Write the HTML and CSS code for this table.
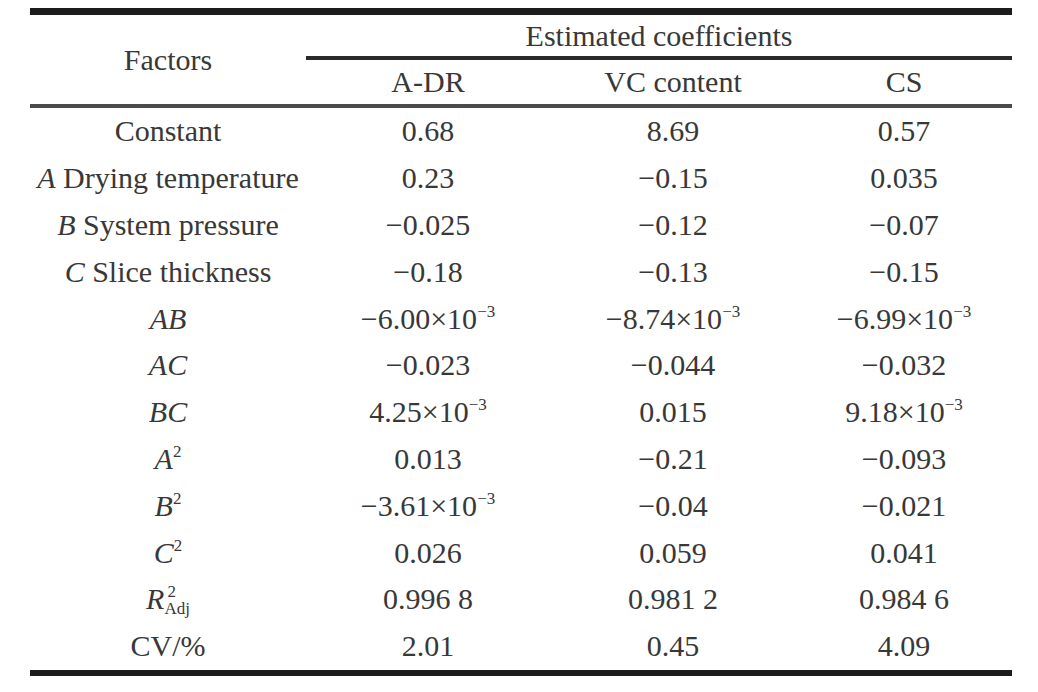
FILE: index.html
```html
<!DOCTYPE html>
<html>
<head>
<meta charset="utf-8">
<link rel="stylesheet" href="styles.css">
</head>
<body>
<table class="coef">
  <colgroup>
    <col class="c-factor">
    <col class="c-adr">
    <col class="c-vc">
    <col class="c-cs">
  </colgroup>
  <thead>
    <tr class="h1">
      <th rowspan="2" class="factors">Factors</th>
      <th colspan="3" class="group">Estimated coefficients</th>
    </tr>
    <tr class="h2">
      <th>A-DR</th>
      <th>VC content</th>
      <th>CS</th>
    </tr>
  </thead>
  <tbody>
    <tr><td>Constant</td><td>0.68</td><td>8.69</td><td>0.57</td></tr>
    <tr><td><i>A</i> Drying temperature</td><td>0.23</td><td>−0.15</td><td>0.035</td></tr>
    <tr><td><i>B</i> System pressure</td><td>−0.025</td><td>−0.12</td><td>−0.07</td></tr>
    <tr><td><i>C</i> Slice thickness</td><td>−0.18</td><td>−0.13</td><td>−0.15</td></tr>
    <tr><td><i>AB</i></td><td>−6.00×10<sup>−3</sup></td><td>−8.74×10<sup>−3</sup></td><td>−6.99×10<sup>−3</sup></td></tr>
    <tr><td><i>AC</i></td><td>−0.023</td><td>−0.044</td><td>−0.032</td></tr>
    <tr><td><i>BC</i></td><td>4.25×10<sup>−3</sup></td><td>0.015</td><td>9.18×10<sup>−3</sup></td></tr>
    <tr><td><i>A</i><sup>2</sup></td><td>0.013</td><td>−0.21</td><td>−0.093</td></tr>
    <tr><td><i>B</i><sup>2</sup></td><td>−3.61×10<sup>−3</sup></td><td>−0.04</td><td>−0.021</td></tr>
    <tr><td><i>C</i><sup>2</sup></td><td>0.026</td><td>0.059</td><td>0.041</td></tr>
    <tr><td><i>R</i><span class="supsub"><span class="ss-sup">2</span><span class="ss-sub">Adj</span></span></td><td>0.996 8</td><td>0.981 2</td><td>0.984 6</td></tr>
    <tr class="last"><td>CV/%</td><td>2.01</td><td>0.45</td><td>4.09</td></tr>
  </tbody>
</table>
</body>
</html>
```

FILE: styles.css
```css
html, body {
  margin: 0;
  padding: 0;
  background: #ffffff;
}

body {
  padding-top: 8px;
  padding-left: 30px;
  font-family: "Liberation Serif", "Times New Roman", serif;
  color: #383838;
}

.coef {
  width: 982px;
  border-collapse: separate;
  border-spacing: 0;
  table-layout: fixed;
  border-top: 7px solid #1c1c1c;
  border-bottom: 6px solid #1c1c1c;
  font-size: 30px;
}

.c-factor { width: 276px; }
.c-adr { width: 244px; }
.c-vc { width: 246px; }
.c-cs { width: 216px; }

.coef th,
.coef td {
  padding: 0;
  text-align: center;
  vertical-align: middle;
  font-weight: normal;
  line-height: 34px;
  white-space: nowrap;
}

.h1 th {
  height: 41px;
}

.h1 .group {
  border-bottom: 4px solid #2a2a2a;
}

.h1 .factors {
  border-bottom: 4px solid #4a4a4a;
}

.h2 th {
  height: 44px;
  border-bottom: 4px solid #4a4a4a;
}

.coef td {
  height: 46.8px;
}

.coef td i {
  font-style: italic;
}

.coef sup {
  font-size: 17px;
  line-height: 0;
  vertical-align: 12px;
}

.supsub {
  display: inline-flex;
  flex-direction: column;
  align-items: flex-start;
  vertical-align: 12px;
  font-size: 17px;
  line-height: 17px;
  margin-left: 1px;
}

.ss-sup {
  margin-left: 2px;
}

.ss-sub {
  margin-left: -1px;
}
```
